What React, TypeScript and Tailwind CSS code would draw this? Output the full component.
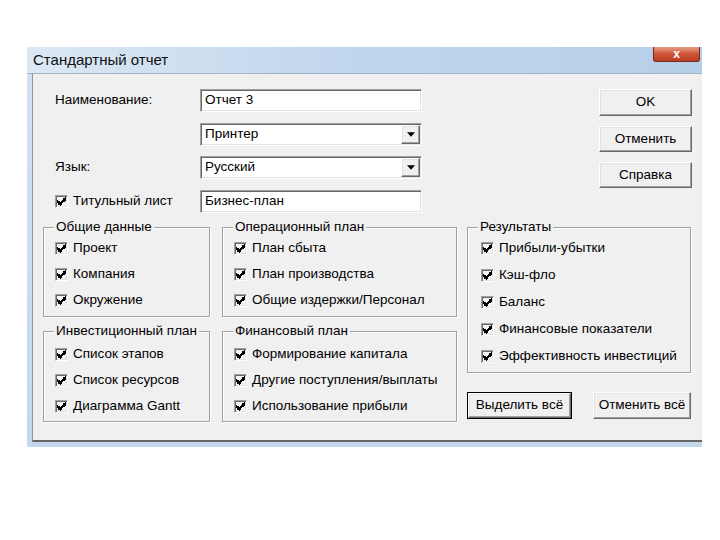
import React from "react";

/* Classic Win32 "Standard report" dialog */

const sunken =
  "border border-[#a0a0a0] border-b-white border-r-white shadow-[inset_1px_1px_0_#696969,inset_-1px_-1px_0_#e3e3e3]";
const raised =
  "border border-white border-b-[#696969] border-r-[#696969] shadow-[inset_-1px_-1px_0_#a0a0a0,inset_1px_1px_0_#e3e3e3] bg-[#f0f0f0]";

function Check() {
  return (
    <svg viewBox="0 0 7 7" className="w-[9px] h-[9px]" shapeRendering="crispEdges">
      <path d="M0 2H1V3H2V4H3V3H4V2H5V1H6V0H7V3H6V4H5V5H4V6H3V7H2V6H1V5H0Z" fill="#000" />
    </svg>
  );
}

function CheckBox({ label }: { label: string }) {
  return (
    <div className="flex items-center gap-[5px] h-full">
      <span
        className={`w-[13px] h-[13px] shrink-0 bg-[#f4f4f4] flex items-center justify-center ${sunken}`}
      >
        <Check />
      </span>
      <span className="whitespace-nowrap">{label}</span>
    </div>
  );
}

function TextField({ value }: { value: string }) {
  return (
    <div className={`h-[23px] bg-white flex items-center pl-[4px] ${sunken}`}>
      <span>{value}</span>
    </div>
  );
}

function Combo({ value }: { value: string }) {
  return (
    <div className={`h-[23px] bg-white flex items-stretch p-[1px] ${sunken}`}>
      <span className="flex-1 flex items-center pl-[3px]">{value}</span>
      <span className={`w-[19px] flex items-center justify-center ${raised}`}>
        <svg viewBox="0 0 7 4" className="w-[8px] h-[5px]">
          <path d="M0 0H7L3.5 4Z" fill="#000" />
        </svg>
      </span>
    </div>
  );
}

function Btn({ label, className = "", isDefault = false }: { label: string; className?: string; isDefault?: boolean }) {
  return (
    <div className={`${isDefault ? "border border-black" : ""} ${className}`}>
      <div className={`h-full flex items-center justify-center ${raised}`}>
        <span className="whitespace-nowrap">{label}</span>
      </div>
    </div>
  );
}

function Group({
  title,
  items,
  className = "",
  rowH = "h-[26px]",
  pad = "pt-[8px] pl-[11px]",
}: {
  title: string;
  items: string[];
  className?: string;
  rowH?: string;
  pad?: string;
}) {
  return (
    <div
      className={`relative border border-[#a0a0a0] shadow-[inset_1px_1px_0_#fff,1px_1px_0_#fff] ${pad} ${className}`}
    >
      <span className="absolute -top-[9px] left-[10px] px-[2px] bg-[#f0f0f0] leading-[16px] whitespace-nowrap">
        {title}
      </span>
      {items.map((it) => (
        <div key={it} className={rowH}>
          <CheckBox label={it} />
        </div>
      ))}
    </div>
  );
}

export default function App() {
  return (
    <div className="w-[720px] h-[540px] bg-white pt-[47px] pl-[27px] font-['Liberation_Sans',Arial,sans-serif] text-[13.5px] text-black">
      <div className="w-[675px] flex flex-col bg-gradient-to-b from-[#d3e2f1] to-[#c4d8ec]">
        {/* title bar */}
        <div className="h-[27px] flex items-start justify-between bg-gradient-to-r from-[#dce8f4] via-[#bfd5ec] to-[#b6cfe8] border-b border-[#9fb2c6]">
          <span className="pl-[6px] pt-[4px] text-[15px] leading-[18px] text-[#111]">Стандартный отчет</span>
          <div className="w-[47px] h-[15px] mr-[2px] rounded-b-[3px] border border-t-0 border-[#7a2a1a] bg-gradient-to-b from-[#e39c84] via-[#cf5436] to-[#b93e24] flex items-center justify-center">
            <span className="text-white text-[12px] leading-[12px] font-bold">x</span>
          </div>
        </div>

        {/* client area */}
        <div className="h-[368px] ml-[5px] bg-[#f0f0f0] border-l border-[#8c9aa8] border-b-2 border-b-[#656565] mb-[5px]">
          {/* top section */}
          <div className="flex pt-[15px] pl-[22px]">
            <div className="grid grid-cols-[145px_222px] grid-rows-[23px_23px_23px_23px] gap-y-[10.5px]">
              <span className="self-center">Наименование:</span>
              <TextField value="Отчет 3" />
              <span />
              <Combo value="Принтер" />
              <span className="self-center">Язык:</span>
              <Combo value="Русский" />
              <div className="self-center">
                <CheckBox label="Титульный лист" />
              </div>
              <TextField value="Бизнес-план" />
            </div>
            <div className="ml-[177px] w-[93px] flex flex-col gap-[10px]">
              <Btn label="OK" className="h-[27px]" />
              <Btn label="Отменить" className="h-[26px]" />
              <Btn label="Справка" className="h-[26px]" />
            </div>
          </div>

          {/* groups */}
          <div className="flex mt-[14px] ml-[10px]">
            <div className="w-[167px] flex flex-col">
              <Group title="Общие данные" items={["Проект", "Компания", "Окружение"]} className="h-[90px]" />
              <Group
                title="Инвестиционный план"
                items={["Список этапов", "Список ресурсов", "Диаграмма Gantt"]}
                className="h-[91px] mt-[14px]"
                pad="pt-[10px] pl-[11px]"
              />
            </div>
            <div className="w-[235px] ml-[12px] flex flex-col">
              <Group
                title="Операционный план"
                items={["План сбыта", "План производства", "Общие издержки/Персонал"]}
                className="h-[90px]"
              />
              <Group
                title="Финансовый план"
                items={["Формирование капитала", "Другие поступления/выплаты", "Использование прибыли"]}
                className="h-[91px] mt-[14px]"
                pad="pt-[10px] pl-[11px]"
              />
            </div>
            <div className="w-[224px] ml-[10px] flex flex-col">
              <Group
                title="Результаты"
                items={["Прибыли-убытки", "Кэш-фло", "Баланс", "Финансовые показатели", "Эффективность инвестиций"]}
                className="h-[146px]"
                rowH="h-[27px]"
                pad="pt-[7px] pl-[13px]"
              />
              <div className="flex justify-between mt-[19px]">
                <Btn label="Выделить всё" className="w-[105px] h-[27px]" isDefault />
                <Btn label="Отменить всё" className="w-[98px] h-[27px]" />
              </div>
            </div>
          </div>
        </div>
      </div>
    </div>
  );
}
